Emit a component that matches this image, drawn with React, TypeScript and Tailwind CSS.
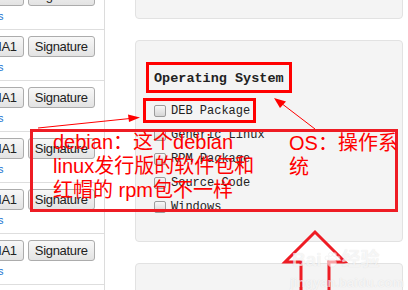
const sans = "font-['Liberation_Sans','Noto_Sans_CJK_SC',sans-serif]"
const mono = "font-['Liberation_Mono','Noto_Sans_CJK_SC',monospace]"

function Btn({ children }: { children: string }) {
  return (
    <button className={`h-[21px] shrink-0 px-[6px] rounded-[3px] border border-[#acacac] bg-gradient-to-b from-[#f8f8f8] to-[#e3e3e3] text-[13px] leading-[19px] tracking-[-0.3px] text-[#222] ${sans}`}>
      {children}
    </button>
  )
}

function Row() {
  return (
    <div className="h-[51px] shrink-0 border-b border-[#dedede] pt-[6px] overflow-hidden">
      <div className="flex gap-[4px] -ml-[23px]">
        <Btn>SHA1</Btn>
        <Btn>Signature</Btn>
      </div>
      <div className={`mt-[3px] -ml-[30px] text-[11px] leading-[14px] text-[#1a73d1] ${sans}`}>Details</div>
    </div>
  )
}

function Check({ label }: { label: string }) {
  return (
    <div className="h-[24px] flex items-center gap-[5px]">
      <span className="w-[12px] h-[12px] rounded-[2px] border border-[#9c9c9c] bg-gradient-to-b from-[#f7f7f7] to-[#d6d6d6]" />
      <span className={`text-[12px] text-[#222] ${mono}`}>{label}</span>
    </div>
  )
}

export default function App() {
  return (
    <div className="relative w-[408px] h-[290px] overflow-hidden bg-white flex">
      {/* left list */}
      <div className="w-[105px] shrink-0 border-r border-[#dcdcdc] overflow-hidden">
        <div className="-mt-[21px] flex flex-col">
          <Row />
          <Row />
          <Row />
          <Row />
          <Row />
          <Row />
          <Row />
        </div>
      </div>

      {/* panels */}
      <div className="flex-1 pl-[30px] pr-[5px]">
        <div className="-mt-[41px] flex flex-col gap-[21px]">
          <div className="h-[60px] rounded-[4px] border border-[#e2e2e2] bg-[#f4f4f4]" />
          <div className="h-[202px] rounded-[4px] border border-[#e2e2e2] bg-[#f4f4f4] pl-[18px] pt-[30px]">
            <div className={`text-[13.5px] leading-[16px] font-bold text-[#222] ${mono}`}>Operating System</div>
            <div className="mt-[12px] flex flex-col">
              <Check label="DEB Package" />
              <Check label="Generic Linux" />
              <Check label="RPM Package" />
              <Check label="Source Code" />
              <Check label="Windows" />
            </div>
          </div>
          <div className="h-[60px] rounded-[4px] border border-[#e2e2e2] bg-[#f4f4f4]" />
        </div>
      </div>

      {/* annotations */}
      <div className="absolute left-[146px] top-[62px] w-[146px] h-[31px] border-[3px] border-[#ff0000]" />
      <div className="absolute left-[143px] top-[98px] w-[113px] h-[25px] border-[3px] border-[#ff0000]" />
      <div className="absolute left-[30px] top-[129px] w-[368px] h-[83px] border-[3px] border-[#ee1c24]" />

      <div className={`absolute left-[53px] top-[130px] text-[20px] leading-[24px] text-[#ff0000] whitespace-nowrap ${sans}`}>
        debian：这个debian<br />linux发行版的软件包和<br />红帽的 rpm包不一样
      </div>
      <div className={`absolute left-[289px] top-[131px] text-[20px] leading-[24px] text-[#ff0000] whitespace-nowrap ${sans}`}>
        OS：操作系<br />统
      </div>

      <svg className="absolute inset-0 pointer-events-none" width="408" height="290" viewBox="0 0 408 290">
        <line x1="38" y1="128" x2="130" y2="118.5" stroke="#ff0000" strokeWidth="1" />
        <polygon points="140,117.5 128,114.5 129,122" fill="#ff0000" />
        <line x1="315" y1="129" x2="281" y2="103" stroke="#ff0000" strokeWidth="1" />
        <polygon points="274,98 286,101.5 280,108" fill="#ff0000" />
        <polyline points="301,290 301,262 285,262 315,232 345,262 329,262 329,290" fill="none" stroke="#ee1c24" strokeWidth="3" />
      </svg>

      {/* watermark */}
      <div className={`absolute left-[292px] top-[249px] flex items-center text-[19px] leading-[22px] font-bold text-white/70 [text-shadow:0_0_1px_rgba(0,0,0,0.12)] ${sans}`}>
        Bai
        <svg width="18" height="18" viewBox="0 0 18 18" className="mx-[1px] opacity-60">
          <ellipse cx="9" cy="12" rx="4.5" ry="4" fill="white" stroke="#e4e4e4" strokeWidth="0.6" />
          <circle cx="4" cy="7" r="2" fill="white" stroke="#e4e4e4" strokeWidth="0.6" />
          <circle cx="7.5" cy="3.5" r="2" fill="white" stroke="#e4e4e4" strokeWidth="0.6" />
          <circle cx="11.5" cy="3.5" r="2" fill="white" stroke="#e4e4e4" strokeWidth="0.6" />
          <circle cx="15" cy="7" r="2" fill="white" stroke="#e4e4e4" strokeWidth="0.6" />
        </svg>
        经验
      </div>
      <div className={`absolute left-[290px] top-[275px] text-[13px] leading-[15px] font-bold text-white/70 [text-shadow:0_0_1px_rgba(0,0,0,0.12)] ${sans}`}>
        jingyan.baidu.com
      </div>
    </div>
  )
}
